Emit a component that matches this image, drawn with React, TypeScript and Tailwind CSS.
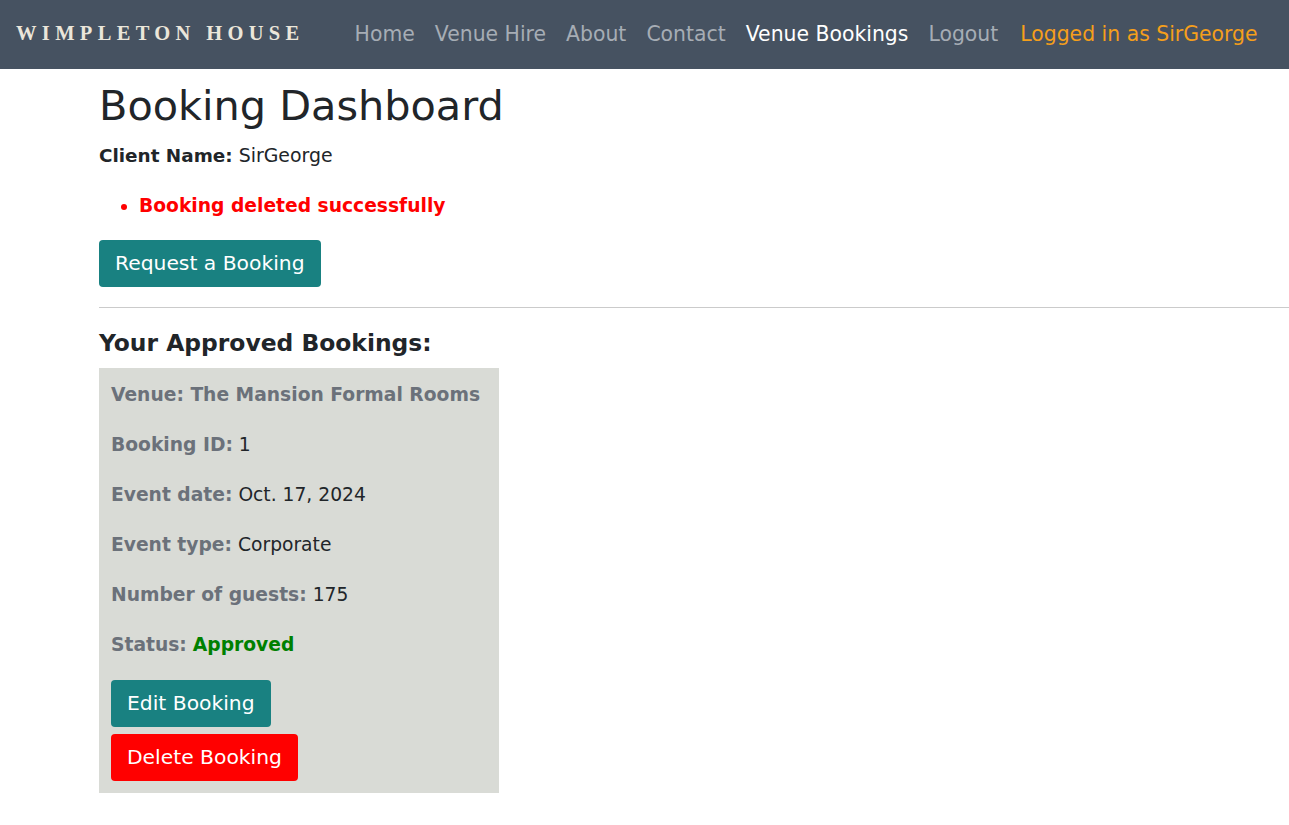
const navLinks = [
  { label: "Home", active: false },
  { label: "Venue Hire", active: false },
  { label: "About", active: false },
  { label: "Contact", active: false },
  { label: "Venue Bookings", active: true },
  { label: "Logout", active: false },
];

const details = [
  { label: "Booking ID:", value: "1" },
  { label: "Event date:", value: "Oct. 17, 2024" },
  { label: "Event type:", value: "Corporate" },
  { label: "Number of guests:", value: "175" },
];

function Navbar() {
  return (
    <nav className="flex h-[69px] items-center bg-[#465261] pl-[16px]">
      <a
        href="#"
        className="-mt-[2px] text-[20.5px] font-bold uppercase tracking-[0.26em] text-[#ebe6da]"
        style={{ fontFamily: '"Liberation Serif", serif' }}
      >
        Wimpleton House
      </a>
      <ul className="ml-[50px] flex items-center gap-[20px] text-[20.4px]">
        {navLinks.map((link) => (
          <li key={link.label}>
            <a
              href="#"
              className={link.active ? "text-white" : "text-[#a6adb5]"}
            >
              {link.label}
            </a>
          </li>
        ))}
        <li className="ml-[2px] text-[#f59f1b]">Logged in as SirGeorge</li>
      </ul>
    </nav>
  );
}

export default function App() {
  return (
    <div
      className="min-h-[825px] bg-white text-[#212529]"
      style={{ fontFamily: '"DejaVu Sans", sans-serif' }}
    >
      <Navbar />

      <main className="pl-[99px]">
        <h1 className="mt-[13px] text-[41.4px] leading-[48px] font-normal">
          Booking Dashboard
        </h1>
        <p className="mt-[12px] text-[18.9px] leading-[27px]">
          <strong className="text-[18.4px]">Client Name:</strong> SirGeorge
        </p>

        {/* Messages */}
        <ul className="mt-[23px] list-disc pl-[40px] text-[18.7px] leading-[27px] font-bold text-[#ff0000]">
          <li>Booking deleted successfully</li>
        </ul>

        <button className="mt-[21px] h-[47px] rounded-[4px] bg-[#198181] px-[16px] text-[20.3px] text-white">
          Request a Booking
        </button>

        <hr className="mt-[20px] border-t border-[#cbcbcb]" />

        <h3 className="mt-[21px] text-[23.4px] leading-[29px] font-bold">
          Your Approved Bookings:
        </h3>

        <div className="mt-[10px] flex w-[400px] flex-col bg-[#d9dbd6] px-[12px] pt-[13px] pb-[12px] text-[18.7px] leading-[27px]">
          <p className="font-bold text-[#6b717a]">Venue: The Mansion Formal Rooms</p>
          {details.map((d) => (
            <p key={d.label} className="mt-[23px]">
              <strong className="text-[#6b717a]">{d.label}</strong> {d.value}
            </p>
          ))}
          <p className="mt-[23px]">
            <strong className="text-[#6b717a]">Status:</strong>{" "}
            <strong className="text-[#008000]">Approved</strong>
          </p>

          <div className="mt-[22px] flex flex-col items-start gap-[7px]">
            <button className="h-[47px] rounded-[4px] bg-[#198181] px-[16px] text-[20.3px] text-white">
              Edit Booking
            </button>
            <button className="h-[47px] rounded-[4px] bg-[#ff0000] px-[16px] text-[20.3px] text-white">
              Delete Booking
            </button>
          </div>
        </div>
      </main>
    </div>
  );
}
